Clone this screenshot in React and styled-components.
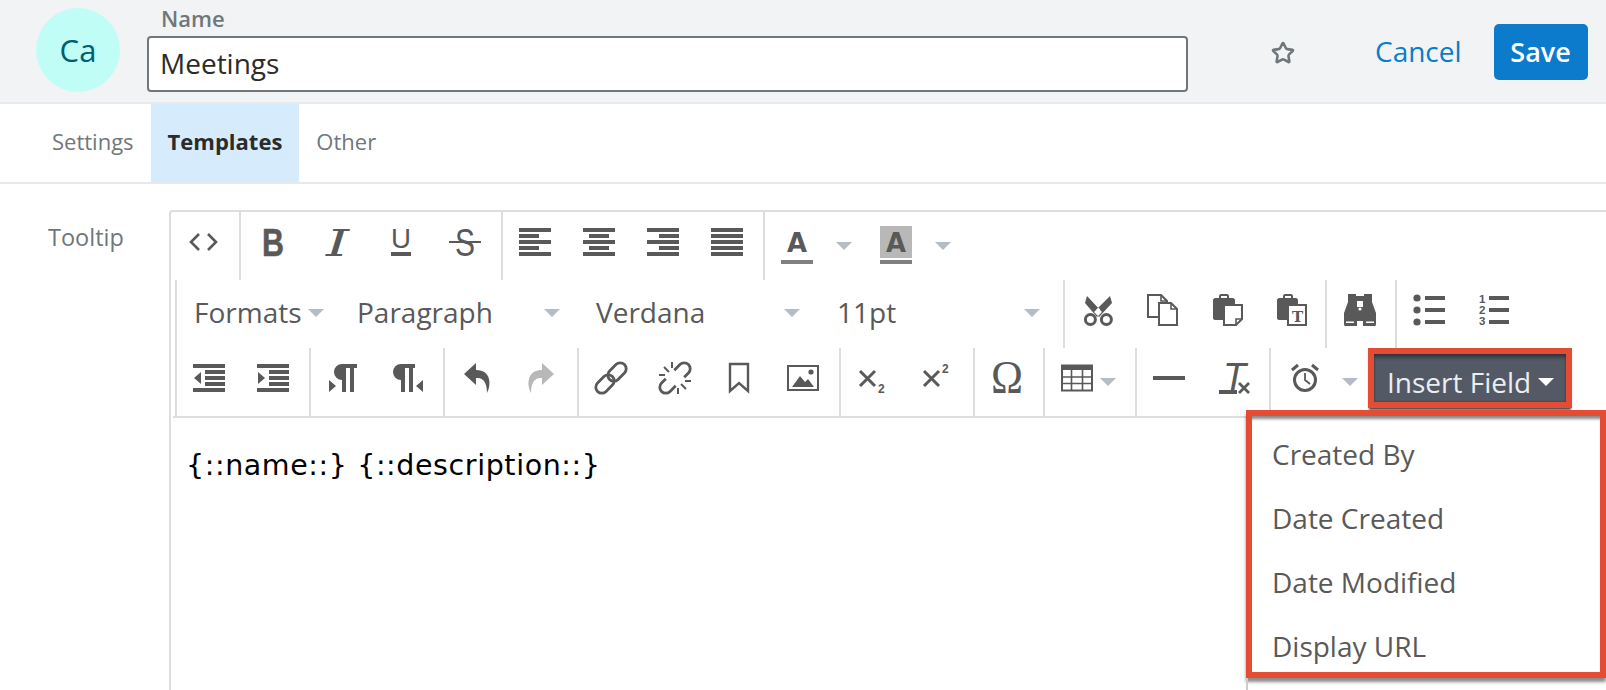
import React from 'react'
import styled, { createGlobalStyle } from 'styled-components'
import { Star } from 'lucide-react'

const GlobalStyle = createGlobalStyle`
  html, body {
    margin: 0;
    height: 100%;
    overflow: hidden;
    background: #fff;
    font-family: "Open Sans", "Liberation Sans", sans-serif;
  }
`
const Page = styled.div`
  width: 1606px;
  height: 690px;
  overflow: hidden;
  display: flex;
  flex-direction: column;
`
const Header = styled.header`
  height: 102px;
  flex: none;
  display: flex;
  align-items: flex-start;
  padding-left: 36px;
  background: #f1f3f5;
  border-bottom: 2px solid #e6e9ed;
`
const Avatar = styled.div`
  width: 84px;
  height: 84px;
  margin-top: 8px;
  border-radius: 50%;
  background: #c0fdf7;
  color: #00606e;
  font-size: 31px;
  display: flex;
  align-items: center;
  justify-content: center;
`
const NameField = styled.div`
  width: 1041px;
  margin-left: 27px;
  display: flex;
  flex-direction: column;
`
const NameLabel = styled.label`
  height: 36px;
  padding-left: 14px;
  font-size: 22px;
  font-weight: 600;
  line-height: 36px;
  color: #6f777b;
`
const NameInput = styled.div`
  height: 52px;
  padding-left: 11px;
  background: #fff;
  border: 2px solid #6f777b;
  border-radius: 4px;
  font-size: 28px;
  line-height: 50px;
  color: #2b2b2b;
`
const FavButton = styled.div`
  width: 24px;
  height: 24px;
  margin: 41px 0 0 83px;
  color: #6f777b;
`
const CancelLink = styled.a`
  margin: 31px 0 0 80px;
  font-size: 28px;
  line-height: 40px;
  color: #0c7bcb;
`
const SaveButton = styled.button`
  width: 94px;
  height: 56px;
  margin: 24px 0 0 32px;
  padding: 0 0 2px;
  border: none;
  border-radius: 5px;
  background: #0c7bcb;
  color: #fff;
  font-family: inherit;
  font-size: 27px;
  font-weight: 600;
`
const Tabs = styled.nav`
  height: 78px;
  flex: none;
  display: flex;
  padding-left: 35px;
  border-bottom: 2px solid #e6e9ed;
`
const Tab = styled.div`
  height: 78px;
  padding: 0 17px;
  font-size: 22px;
  line-height: 74px;
  font-weight: ${p => (p.$active ? 700 : 400)};
  color: ${p => (p.$active ? '#2b2b2b' : '#6f777b')};
  background: ${p => (p.$active ? '#d6ecfc' : 'transparent')};
`
const Body = styled.main`
  flex: 1;
  display: flex;
  min-height: 0;
`
const FieldLabel = styled.div`
  width: 121px;
  flex: none;
  padding: 38px 0 0 48px;
  font-size: 23.5px;
  line-height: 30px;
  color: #6f777b;
`
const Editor = styled.div`
  flex: 1;
  margin-top: 26px;
  border: 2px solid #ddd;
  border-right: none;
  border-bottom: none;
  border-top-left-radius: 4px;
`
const ToolRow = styled.div`
  height: 68px;
  display: flex;
`
const LowerToolbar = styled.div`
  margin-left: 2px;
  padding-left: 2px;
  border-bottom: 2px solid #ddd;
`
const LowerRows = styled.div`
  border-left: 2px solid #ddd;
`
const Group = styled.div`
  display: flex;
  align-items: flex-start;
  padding-right: 4px;
  border-right: ${p => (p.$last ? 'none' : '2px solid #ddd')};
`
const ToolButton = styled.div`
  width: 64px;
  height: 60px;
  flex: none;
  display: flex;
  align-items: center;
  justify-content: center;
  color: #595959;
`
const IconSvg = styled.svg`
  flex: none;
  overflow: visible;
`
const Caret = styled.span`
  width: 0;
  height: 0;
  flex: none;
  margin-top: ${p => p.$drop ?? 8}px;
  border-left: 8px solid transparent;
  border-right: 8px solid transparent;
  border-top: 8px solid ${p => p.$color || '#b4bcc5'};
`
const SplitCaret = styled.div`
  width: 30px;
  height: 60px;
  flex: none;
  margin-right: ${p => p.$gap || 0}px;
  display: flex;
  align-items: center;
  justify-content: center;
`
const MenuTool = styled.div`
  width: 86px;
  height: 60px;
  display: flex;
  align-items: center;
  gap: 7px;
  padding-left: 16px;
  box-sizing: border-box;
  color: #595959;
`
const ListBox = styled.div`
  width: ${p => p.$width}px;
  height: 60px;
  box-sizing: border-box;
  flex: none;
  display: flex;
  align-items: center;
  justify-content: space-between;
  padding: 4px ${p => p.$right || 19}px 0 17px;
  font-size: 28px;
  color: #595959;
`
const InsertWrap = styled.div`
  position: relative;
  margin-left: 3px;
`
const InsertButton = styled.div`
  width: 204px;
  height: 60px;
  box-sizing: border-box;
  display: flex;
  align-items: center;
  gap: 7px;
  padding: 7px 0 0 13px;
  border: 6px solid #e44d33;
  background: #535a66;
  box-shadow: inset 0 5px 4px -2px #2f3237, inset 0 0 2px #2f3237, 0 3px 2px -1px rgba(0, 0, 0, 0.7);
  font-size: 28px;
  color: #eceef0;
`
const FieldMenu = styled.ul`
  position: absolute;
  top: 62px;
  left: -122px;
  width: 360px;
  height: 268px;
  box-sizing: border-box;
  margin: 0;
  padding: 6px 0 0 20px;
  list-style: none;
  background: #fff;
  border: 6px solid #e44d33;
  box-shadow: inset 0 5px 3px -2px #8a8a8a, 0 4px 3px rgba(0, 0, 0, 0.45);
  &::after {
    content: '';
    position: absolute;
    left: -6px;
    top: 100%;
    width: 2px;
    height: 20px;
    margin-top: 6px;
    background: #ccc;
  }
`
const FieldItem = styled.li`
  height: 64px;
  font-size: 28px;
  line-height: 64px;
  color: #595959;
`
const Content = styled.div`
  padding: 31px 0 0 15px;
  font-family: "DejaVu Sans", Verdana, sans-serif;
  font-size: 28.5px;
  letter-spacing: 0.6px;
  line-height: 34px;
  color: #000;
`

const Ico = ({ children }) => (
  <IconSvg width="32" height="32" viewBox="0 0 32 32" fill="currentColor">{children}</IconSvg>
)
const bars = (rows) => rows.map(([x, y, w], i) => <rect key={i} x={x} y={y} width={w} height="4" />)

const icons = {
  code: <Ico><path d="M12 8 4 16l8 8M21 8l8 8-8 8" fill="none" stroke="currentColor" strokeWidth="2.6" /></Ico>,
  bold: <Ico><text x="5" y="30" fontFamily="Liberation Sans" fontWeight="700" fontSize="39" textLength="22" lengthAdjust="spacingAndGlyphs" stroke="currentColor" strokeWidth="0.5">B</text></Ico>,
  italic: <Ico><text x="5" y="30" fontFamily="DejaVu Serif" fontStyle="italic" fontSize="38" textLength="23" lengthAdjust="spacingAndGlyphs">I</text></Ico>,
  underline: (
    <Ico>
      <text x="6" y="22" fontFamily="Liberation Sans" fontSize="28" textLength="20" lengthAdjust="spacingAndGlyphs">U</text>
      <rect x="6" y="26" width="20" height="4" />
    </Ico>
  ),
  strike: (
    <Ico>
      <text x="6" y="30" fontFamily="Liberation Sans" fontSize="38" textLength="20" lengthAdjust="spacingAndGlyphs">S</text>
      <rect x="0" y="15" width="32" height="2" />
    </Ico>
  ),
  alignLeft: <Ico>{bars([[0, 2, 32], [0, 8, 20], [0, 14, 32], [0, 20, 20], [0, 26, 32]])}</Ico>,
  alignCenter: <Ico>{bars([[0, 2, 32], [6, 8, 20], [0, 14, 32], [6, 20, 20], [0, 26, 32]])}</Ico>,
  alignRight: <Ico>{bars([[0, 2, 32], [12, 8, 20], [0, 14, 32], [12, 20, 20], [0, 26, 32]])}</Ico>,
  justify: <Ico>{bars([[0, 2, 32], [0, 8, 32], [0, 14, 32], [0, 20, 32], [0, 26, 32]])}</Ico>,
  textColor: (
    <Ico>
      <text x="6" y="26" fontFamily="DejaVu Sans" fontWeight="700" fontSize="27" textLength="20" lengthAdjust="spacingAndGlyphs">A</text>
      <rect x="0" y="34" width="32" height="4" fill="#808080" />
    </Ico>
  ),
  backColor: (
    <Ico>
      <rect x="0" y="0" width="32" height="32" fill="#b8b8b8" />
      <text x="6" y="26" fontFamily="DejaVu Sans" fontWeight="700" fontSize="27" textLength="20" lengthAdjust="spacingAndGlyphs">A</text>
      <rect x="0" y="34" width="32" height="4" fill="#808080" />
    </Ico>
  ),
  scissors: (
    <Ico>
      <path d="M6 2 21 18l-5 5L4 9zM29 2 13 18l5 5L31 9z" />
      <circle cx="9.400" cy="25.500" r="5" fill="#fff" stroke="currentColor" strokeWidth="3" />
      <circle cx="25.400" cy="25.500" r="5" fill="#fff" stroke="currentColor" strokeWidth="3" />
      <circle cx="17.400" cy="16" r="1.800" fill="#fff" />
    </Ico>
  ),
  copy: (
    <Ico>
      <path d="M3 1h13l6 6v16H3z" fill="none" stroke="currentColor" strokeWidth="2" />
      <path d="M14 9h12l6 6v16H14z" fill="#fff" stroke="currentColor" strokeWidth="2" />
      <path d="M16 1v6h6M26 9v6h6" fill="none" stroke="currentColor" strokeWidth="1.600" />
    </Ico>
  ),
  paste: (
    <Ico>
      <path d="M10 4V2c0-1 1-2 2-2h6c1 0 2 1 2 2v2h4c1 0 2 1 2 2v20H6c-1 0-2-1-2-2V6c0-1 1-2 2-2zm2 0h6V2h-6z" fillRule="evenodd" />
      <path d="M15 11h18v14l-6 6H15z" fill="#fff" stroke="currentColor" strokeWidth="2" />
      <path d="M33 25h-6v6" fill="none" stroke="currentColor" strokeWidth="1.600" />
    </Ico>
  ),
  pasteText: (
    <Ico>
      <path d="M10 4V2c0-1 1-2 2-2h6c1 0 2 1 2 2v2h3c1 0 2 1 2 2v20H6c-1 0-2-1-2-2V6c0-1 1-2 2-2zm2 0h6V2h-6z" fillRule="evenodd" />
      <rect x="15" y="11" width="18" height="20" fill="#fff" stroke="currentColor" strokeWidth="2" />
      <text x="19" y="28" fontFamily="DejaVu Serif" fontWeight="700" fontSize="15">T</text>
    </Ico>
  ),
  find: (
    <Ico>
      <path d="M5 0h8v7h1v25H2.500C1.500 32 1 31.500 1 30V19L5 8zM29 0h-8v7h-1v25h11.500c1 0 1.500-.500 1.500-2V19L29 8z" />
      <rect x="13" y="2" width="8" height="5" />
      <rect x="14" y="13" width="6" height="14" />
      <circle cx="17" cy="15" r="1.600" fill="#fff" />
      <path d="M3 27.500h8V29H3zM23 27.500h8V29h-8z" fill="#fff" />
    </Ico>
  ),
  bullets: (
    <Ico>
      <circle cx="4" cy="4" r="3.600" /><circle cx="4" cy="16" r="3.600" /><circle cx="4" cy="28" r="3.600" />
      {bars([[12, 2, 20], [12, 14, 20], [12, 26, 20]])}
    </Ico>
  ),
  numbers: (
    <Ico>
      <g fontFamily="Liberation Sans" fontWeight="700" fontSize="11.500">
        <text x="2" y="9">1</text><text x="2" y="20">2</text><text x="2" y="31">3</text>
      </g>
      {bars([[12, 2, 20], [12, 14, 20], [12, 26, 20]])}
    </Ico>
  ),
  outdent: (
    <Ico>
      {bars([[0, 2, 32], [12, 8, 20], [12, 14, 20], [12, 20, 20], [0, 26, 32]])}
      <path d="M8 10 1 16l7 6z" />
    </Ico>
  ),
  indent: (
    <Ico>
      {bars([[0, 2, 32], [12, 8, 20], [12, 14, 20], [12, 20, 20], [0, 26, 32]])}
      <path d="M1 10l7 6-7 6z" />
    </Ico>
  ),
  ltr: <Ico><path d="M30 2H15a8 8 0 0 0 0 16v12h4V6h4v24h4V6h3zM2 18l7 6-7 6z" /></Ico>,
  rtl: <Ico><path d="M24 2H10a8 8 0 0 0 0 16v12h4V6h4v24h4V6h2zM32 18l-7 6 7 6z" /></Ico>,
  undo: <Ico><path d="M15 1 3 12l12 11v-7c7-1 11 4 11 15 4-7 5-23-11-23z" /></Ico>,
  redo: <Ico><path d="M17 1l12 11-12 11v-7c-7-1-11 4-11 15-4-7-5-23 11-23z" fill="#b8b8b8" /></Ico>,
  link: (
    <Ico>
      <g transform="rotate(-45 16 16)" fill="none" stroke="currentColor" strokeWidth="2.800">
        <rect x="-3" y="10" width="21" height="12" rx="6" />
        <rect x="14" y="10" width="21" height="12" rx="6" />
      </g>
    </Ico>
  ),
  unlink: (
    <Ico>
      <g transform="rotate(-45 16 16)" fill="none" stroke="currentColor" strokeWidth="2.800">
        <path d="M9 10H3a6 6 0 0 0 0 12h8" />
        <path d="M23 22h6a6 6 0 0 0 0-12h-8" />
      </g>
      <path d="M5 5l5 5M13 0v6M0 13h6M27 27l-5-5M19 32v-6M32 19h-6" stroke="currentColor" strokeWidth="2" fill="none" />
    </Ico>
  ),
  bookmark: <Ico><path d="M7 2h18v27l-9-8-9 8z" fill="none" stroke="currentColor" strokeWidth="2.400" /></Ico>,
  image: (
    <Ico>
      <rect x="1" y="4" width="30" height="24" fill="none" stroke="currentColor" strokeWidth="2" />
      <path d="M5 25l8-11 5 6 3-3 6 8z" />
      <circle cx="24" cy="10" r="2.600" />
    </Ico>
  ),
  subscript: (
    <Ico>
      <path d="M3 9l15 15M18 9 3 24" stroke="currentColor" strokeWidth="3" fill="none" />
      <text x="21" y="31" fontFamily="Liberation Sans" fontWeight="700" fontSize="12">2</text>
    </Ico>
  ),
  superscript: (
    <Ico>
      <path d="M3 9l15 15M18 9 3 24" stroke="currentColor" strokeWidth="3" fill="none" />
      <text x="21" y="11" fontFamily="Liberation Sans" fontWeight="700" fontSize="12">2</text>
    </Ico>
  ),
  omega: <Ico><text x="0" y="31" fontFamily="Liberation Serif" fontSize="46" textLength="32" lengthAdjust="spacingAndGlyphs">Ω</text></Ico>,
  table: (
    <Ico>
      <rect x="1" y="3.500" width="30" height="25" fill="none" stroke="currentColor" strokeWidth="2" />
      <rect x="0" y="3" width="32" height="5" />
      <path d="M0 15h32M0 21.500h32M10.500 4v24M21.500 4v24" stroke="currentColor" strokeWidth="1.600" fill="none" />
    </Ico>
  ),
  hr: <Ico><rect x="0" y="14" width="32" height="4" /></Ico>,
  clear: (
    <Ico>
      <text x="6" y="28" fontFamily="Liberation Sans" fontStyle="italic" fontSize="38" textLength="23" lengthAdjust="spacingAndGlyphs">T</text>
      <rect x="2" y="28" width="18" height="4" />
      <path d="M22 21l10 10M32 21 22 31" stroke="currentColor" strokeWidth="2.800" fill="none" />
    </Ico>
  ),
  clock: (
    <Ico>
      <circle cx="18" cy="18" r="10.500" fill="none" stroke="currentColor" strokeWidth="3" />
      <path d="M18 11v7l5 4" fill="none" stroke="currentColor" strokeWidth="1.800" />
      <path d="M5 8l6-5M31 8l-6-5" stroke="currentColor" strokeWidth="3" fill="none" />
    </Ico>
  ),
}

const Tool = ({ name }) => <ToolButton>{icons[name]}</ToolButton>

const SplitTool = ({ name, gap }) => (
  <>
    <Tool name={name} />
    <SplitCaret $gap={gap}><Caret /></SplitCaret>
  </>
)

const ToolGroup = ({ names, last }) => (
  <Group $last={last}>{names.map(n => <Tool key={n} name={n} />)}</Group>
)

const List = ({ label, width, right }) => (
  <ListBox $width={width} $right={right}>{label}<Caret $drop={2} /></ListBox>
)

const FIELDS = ['Created By', 'Date Created', 'Date Modified', 'Display URL']

export default function App() {
  return (
    <Page>
      <GlobalStyle />
      <Header>
        <Avatar>Ca</Avatar>
        <NameField>
          <NameLabel>Name</NameLabel>
          <NameInput>Meetings</NameInput>
        </NameField>
        <FavButton><Star size={24} strokeWidth={2.6} /></FavButton>
        <CancelLink>Cancel</CancelLink>
        <SaveButton>Save</SaveButton>
      </Header>
      <Tabs>
        <Tab>Settings</Tab>
        <Tab $active>Templates</Tab>
        <Tab>Other</Tab>
      </Tabs>
      <Body>
        <FieldLabel>Tooltip</FieldLabel>
        <Editor>
          <ToolRow>
            <ToolGroup names={['code']} />
            <ToolGroup names={['bold', 'italic', 'underline', 'strike']} />
            <ToolGroup names={['alignLeft', 'alignCenter', 'alignRight', 'justify']} />
            <Group $last>
              <SplitTool name="textColor" gap={5} />
              <SplitTool name="backColor" />
            </Group>
          </ToolRow>
          <LowerToolbar>
            <LowerRows>
              <ToolRow>
                <Group>
                  <List label="Formats" width={163} right={16} />
                  <List label="Paragraph" width={239} />
                  <List label="Verdana" width={241} right={20} />
                  <List label="11pt" width={239} />
                </Group>
                <ToolGroup names={['scissors', 'copy', 'paste', 'pasteText']} />
                <ToolGroup names={['find']} />
                <ToolGroup names={['bullets', 'numbers']} last />
              </ToolRow>
              <ToolRow>
                <ToolGroup names={['outdent', 'indent']} />
                <ToolGroup names={['ltr', 'rtl']} />
                <ToolGroup names={['undo', 'redo']} />
                <ToolGroup names={['link', 'unlink', 'bookmark', 'image']} />
                <ToolGroup names={['subscript', 'superscript']} />
                <ToolGroup names={['omega']} />
                <Group>
                  <MenuTool>{icons.table}<Caret /></MenuTool>
                </Group>
                <ToolGroup names={['hr', 'clear']} />
                <Group $last>
                  <SplitTool name="clock" />
                  <InsertWrap>
                    <InsertButton>Insert Field<Caret $color="#fff" $drop={0} /></InsertButton>
                    <FieldMenu>
                      {FIELDS.map(f => <FieldItem key={f}>{f}</FieldItem>)}
                    </FieldMenu>
                  </InsertWrap>
                </Group>
              </ToolRow>
            </LowerRows>
          </LowerToolbar>
          <Content>{'{::name::} {::description::}'}</Content>
        </Editor>
      </Body>
    </Page>
  )
}
